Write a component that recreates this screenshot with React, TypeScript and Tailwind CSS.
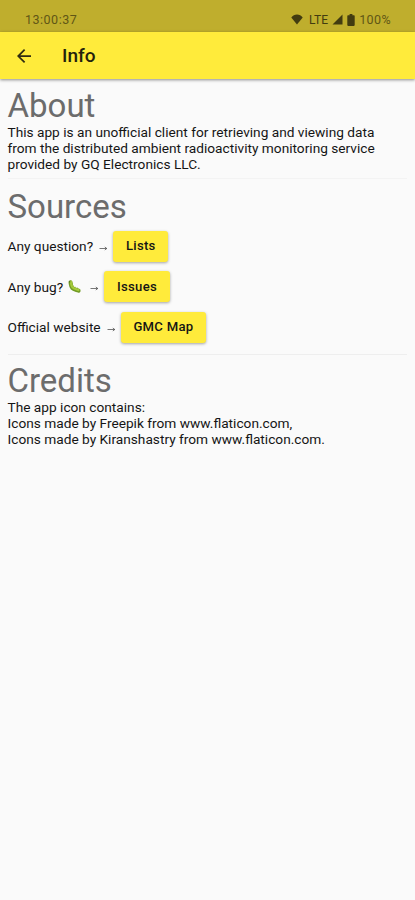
import type { ReactNode } from "react";

function StatusBar() {
  return (
    <div className="flex h-8 items-center justify-between bg-[#bfae2d] pt-[8px] pr-[24px] pl-[25px] text-[12.5px] text-[#5f5616]">
      <span className="tracking-[0.5px]">13:00:37</span>

      <div className="flex items-center text-[#423c10]">
        <svg className="h-[11px] w-3" viewBox="0 0 12 11" fill="currentColor">
          <path d="M0.3 3.4C1.7 1.5 3.7.5 6 .5s4.3 1 5.7 2.9L6 10.6Z" />
        </svg>
        <span className="ml-[6px] text-[12px] tracking-[0.1px]">LTE</span>
        <svg className="ml-[4px] h-[11px] w-[11px]" viewBox="0 0 11 11" fill="currentColor">
          <path d="M10.5.5v10H.5Z" />
        </svg>
        <svg className="ml-[4px] h-3 w-[8px]" viewBox="0 0 8 12" fill="currentColor">
          <path d="M2.6 0h2.8v1.2H7c.4 0 .7.3.7.7v9.2c0 .5-.3.8-.7.8H1c-.4 0-.7-.3-.7-.8V1.9c0-.4.3-.7.7-.7h1.6Z" />
        </svg>
        <span className="ml-[4px] tracking-[0.4px] text-[#5f5616]">100%</span>
      </div>
    </div>
  );
}

function AppBar() {
  return (
    <header className="relative flex h-[47px] items-center bg-[#ffeb3b] pl-[17px] shadow-[0_1px_3px_rgba(0,0,0,0.45)]">
      <button type="button" aria-label="Back">
        <svg className="h-[14px] w-[14px]" viewBox="4 4 16 16" fill="#302c10">
          <path d="M20 11H7.83l5.59-5.59L12 4l-8 8 8 8 1.41-1.41L7.83 13H20v-2z" />
        </svg>
      </button>
      <h1 className="ml-[31px] pt-px text-[19px] font-medium text-[#25220c]">Info</h1>
    </header>
  );
}

function Heading({ children }: { children: ReactNode }) {
  return (
    <h2 className="h-[39px] pt-px text-[33px] leading-[40px] text-[#6c6c6c]">
      {children}
    </h2>
  );
}

function Row({ label, action }: { label: ReactNode; action: string }) {
  return (
    <div className="flex h-[40.5px] items-center">
      <span className="flex items-center">{label}</span>
      <svg className="ml-[6px] mt-[4px] h-[5px] w-[9px]" viewBox="0 0 9 5" fill="none" stroke="#555" strokeWidth="0.8">
        <path d="M0.5 2.5h7.5M5.8 1l2 1.5-2 1.5" />
      </svg>
      <button
        type="button"
        className="ml-[5px] h-[31px] rounded-[3px] bg-[#ffeb3b] px-[12.8px] text-[13.1px] font-medium tracking-[0.28px] shadow-[0_1px_3px_rgba(0,0,0,0.35)]"
      >
        {action}
      </button>
    </div>
  );
}

function Bug() {
  return (
    <svg className="mr-[2px] mb-px ml-[4px] h-[15px] w-[15px]" viewBox="0 0 14 15">
      <path d="M3 3.2c.4 2.2.2 4.2 1.8 5.8 1.5 1.5 4 1.8 6.3 2.7" fill="none" stroke="#719b25" strokeWidth="4" strokeLinecap="round" />
      <path d="M3.4 2.8c.5 2 .2 4 1.6 5.4 1.5 1.5 3.8 1.8 5.8 2.7" fill="none" stroke="#a5ca3b" strokeWidth="2.4" strokeLinecap="round" />
      <path d="m4.2 5 1.2-.4m-.4 3 1.3-1m.7 2.6.7-1.4m1.8 2.1.5-1.4" stroke="#7da52c" strokeWidth=".6" />
      <circle cx="2.3" cy="2.8" r=".6" fill="#354c19" />
    </svg>
  );
}

export default function App() {
  return (
    <div className="min-h-[900px] bg-[#fafafa] font-[Roboto,sans-serif] text-[13.7px] leading-[16.2px] text-[#151515]">
      <StatusBar />
      <AppBar />

      <main className="pt-[6px] pr-2 pl-[7.5px]">
        <section className="h-[94px] border-b border-[#f3f3f3]">
          <Heading>About</Heading>
          <p className="whitespace-nowrap">
            This app is an unofficial client for retrieving and viewing data
            <br />
            from the distributed ambient radioactivity monitoring service
            <br />
            provided by GQ Electronics LLC.
          </p>
        </section>

        <section className="h-[176px] border-b border-[#eeeeee] pt-[7px]">
          <Heading>Sources</Heading>
          <div className="pt-px">
            <Row label="Any question?" action="Lists" />
            <Row label={<>Any bug? <Bug /></>} action="Issues" />
            <Row label="Official website" action="GMC Map" />
          </div>
        </section>

        <section className="pt-[5px]">
          <Heading>Credits</Heading>
          <p className="whitespace-nowrap">
            The app icon contains:
            <br />
            Icons made by Freepik from www.flaticon.com,
            <br />
            Icons made by Kiranshastry from www.flaticon.com.
          </p>
        </section>
      </main>
    </div>
  );
}
